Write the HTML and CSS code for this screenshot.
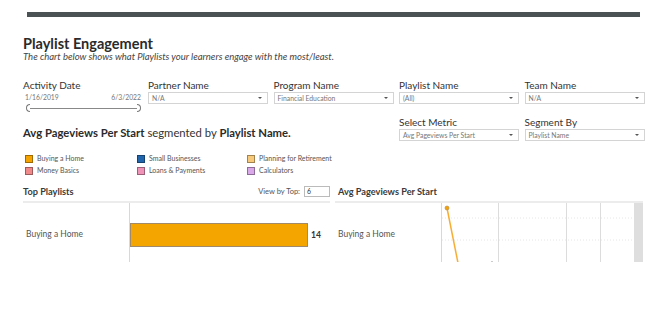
FILE: index.html
```html
<!DOCTYPE html>
<html lang="en">
<head>
  <meta charset="UTF-8">
  <title>Playlist Engagement</title>
  <link rel="stylesheet" href="styles.css">
</head>
<body>
  <div class="page">
    <div class="topbar"></div>

    <div class="header">
      <h1>Playlist Engagement</h1>
      <p class="subtitle">The chart below shows what Playlists your learners engage with the most/least.</p>
    </div>

    <div class="filters">
      <div class="filter date-filter">
        <label>Activity Date</label>
        <div class="dates"><span>1/16/2019</span><span>6/3/2022</span></div>
        <div class="slider"><span class="knob left"></span><span class="track"></span><span class="knob right"></span></div>
      </div>
      <div class="filter">
        <label>Partner Name</label>
        <div class="dropdown">N/A</div>
      </div>
      <div class="filter">
        <label>Program Name</label>
        <div class="dropdown">Financial Education</div>
      </div>
      <div class="filter">
        <label>Playlist Name</label>
        <div class="dropdown">(All)</div>
      </div>
      <div class="filter">
        <label>Team Name</label>
        <div class="dropdown">N/A</div>
      </div>
    </div>

    <div class="metric-row">
      <h2><b>Avg Pageviews Per Start</b> segmented by <b>Playlist Name.</b></h2>
      <div class="filter">
        <label>Select Metric</label>
        <div class="dropdown">Avg Pageviews Per Start</div>
      </div>
      <div class="filter">
        <label>Segment By</label>
        <div class="dropdown">Playlist Name</div>
      </div>
    </div>

    <div class="legend">
      <div class="item"><span class="swatch" style="background:#f5a300"></span>Buying a Home</div>
      <div class="item"><span class="swatch" style="background:#2166ac"></span>Small Businesses</div>
      <div class="item"><span class="swatch" style="background:#f7c97a"></span>Planning for Retirement</div>
      <div class="item"><span class="swatch" style="background:#f08a8a"></span>Money Basics</div>
      <div class="item"><span class="swatch" style="background:#f093b8"></span>Loans &amp; Payments</div>
      <div class="item"><span class="swatch" style="background:#d9a8e8"></span>Calculators</div>
    </div>

    <div class="charts">
      <div class="panel left-panel">
        <div class="panel-head">
          <h3>Top Playlists</h3>
          <div class="top-n">View by Top: <span class="num-box">6</span></div>
        </div>
        <div class="chart">
          <div class="row-label">Buying a Home</div>
          <div class="bar-area">
            <div class="bar" style="width:178px"></div>
            <span class="bar-value">14</span>
          </div>
        </div>
      </div>

      <div class="panel right-panel">
        <div class="panel-head">
          <h3>Avg Pageviews Per Start</h3>
        </div>
        <div class="chart">
          <div class="row-label">Buying a Home</div>
          <div class="line-area">
            <svg width="192" height="60" viewBox="0 0 192 60">
              <line x1="0" y1="15" x2="192" y2="15" stroke="#e6e6e6" stroke-dasharray="1 2"/>
              <line x1="0" y1="37" x2="192" y2="37" stroke="#e6e6e6" stroke-dasharray="1 2"/>
              <line x1="56.5" y1="0" x2="56.5" y2="60" stroke="#dcdcdc"/>
              <line x1="124.5" y1="0" x2="124.5" y2="60" stroke="#dcdcdc"/>
              <line x1="158.5" y1="0" x2="158.5" y2="60" stroke="#dcdcdc"/>
              <line x1="5" y1="5" x2="16" y2="60" stroke="#f7ae32" stroke-width="1.5"/>
              <circle cx="5" cy="5" r="2" fill="#f5a300" stroke="#b08a50" stroke-width="0.6"/>
              <line x1="50" y1="58" x2="50" y2="60" stroke="#999"/>
            </svg>
          </div>
          <div class="scrollbar"></div>
        </div>
      </div>
    </div>
  </div>
</body>
</html>
```

FILE: styles.css
```css
body { margin: 0; background: #fff; font-family: Lato, "Open Sans", Arial, sans-serif; color: #333; }
.page { width: 670px; height: 262px; overflow: hidden; }

.topbar { height: 5px; background: #4b5253; margin: 12px 30px 0 27px; }

.header { padding-left: 23px; margin-top: 18px; }
h1 { margin: 0; font-size: 14.5px; font-weight: 700; color: #2b2b2b; line-height: 17px; }
.subtitle { margin: -1px 0 0; font-size: 9.5px; font-style: italic; color: #444; line-height: 12px; }

.filters { display: flex; padding-left: 23px; margin-top: 16px; }
.filter { width: 120px; margin-right: 5.5px; }
.filter label { display: block; font-size: 10px; color: #333; line-height: 12px; }
.dropdown {
  position: relative; height: 10px; border: 1px solid #d4d4d4; margin-top: 1px;
  font-size: 6.8px; line-height: 10px; color: #777; padding-left: 3px;
}
.dropdown::after {
  content: ""; position: absolute; right: 5px; top: 4px;
  border-left: 2px solid transparent; border-right: 2px solid transparent; border-top: 2.5px solid #555;
}

.date-filter { width: 118px; margin-right: 7px; }
.dates { display: flex; justify-content: space-between; font-size: 6.8px; color: #777; padding: 0 0 0 2px; margin-top: 2px; line-height: 9px; }
.slider { display: flex; align-items: center; margin-top: 2px; padding-left: 3px; }
.slider .track { flex: 1; height: 1px; background: #888; }
.slider .knob { width: 3px; height: 6px; border: 1px solid #777; }
.slider .knob.left { border-radius: 4px 0 0 4px; border-right: none; }
.slider .knob.right { border-radius: 0 4px 4px 0; border-left: none; }

.metric-row { display: flex; align-items: flex-end; padding-left: 23px; margin-top: 4px; }
.metric-row h2 { margin: 0 0 1px; width: 376px; font-size: 11.3px; font-weight: 400; color: #333; line-height: 14px; }
.metric-row h2 b { font-weight: 700; color: #2b2b2b; }

.legend { display: grid; grid-template-columns: 112px 110px 110px; padding-left: 25px; margin-top: 13px; row-gap: 3px; }
.legend .item { display: flex; align-items: center; font-size: 7px; color: #555; line-height: 9px; }
.swatch { width: 6px; height: 6px; border: 1px solid rgba(0,0,0,0.35); margin-right: 4px; }

.charts { display: flex; margin-top: 9px; }
.panel-head { display: flex; justify-content: space-between; align-items: center; height: 14px; }
.panel h3 { margin: 0; font-size: 9.2px; font-weight: 700; color: #3a3a3a; }
.top-n { font-size: 7.5px; color: #555; display: flex; align-items: center; }
.num-box { display: inline-block; width: 22px; height: 9px; border: 1px solid #bbb; margin-left: 4px; font-size: 6.8px; line-height: 9px; padding-left: 2px; color: #333; }

.chart { display: flex; border-top: 2px solid #ececec; margin-top: 3px; height: 60px; }
.row-label { font-size: 8.5px; color: #555; padding-left: 3px; padding-top: 26px; }

.left-panel { width: 307px; margin-left: 23px; }
.left-panel .row-label { width: 103px; }
.bar-area { flex: 1; border-left: 1px solid #d8d8d8; display: flex; align-items: center; padding-top: 4px; }
.bar { height: 24px; background: #f5a500; border: 1px solid #a08a6a; box-sizing: border-box; }
.bar-value { font-size: 8.5px; font-weight: 700; color: #333; margin-left: 3px; }

.right-panel { width: 308px; margin-left: 5px; }
.right-panel .panel-head h3 { padding-left: 3px; }
.right-panel .row-label { width: 103px; }
.line-area { width: 192px; border-left: 1px solid #d8d8d8; }
.line-area svg { display: block; }
.scrollbar { width: 9px; background: #dedede; }
```
